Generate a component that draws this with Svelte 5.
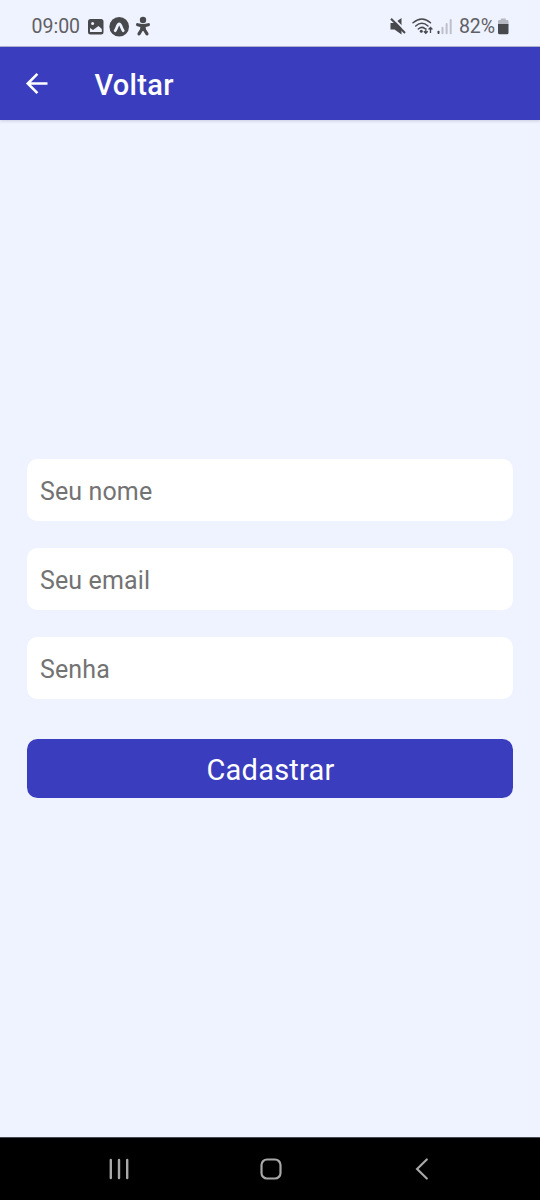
<script>
  const fields = [
    { name: 'nome', type: 'text', placeholder: 'Seu nome' },
    { name: 'email', type: 'email', placeholder: 'Seu email' },
    { name: 'senha', type: 'password', placeholder: 'Senha' }
  ];
</script>

<div class="screen">
  <div class="status">
    <span class="clock">09:00</span>
    <svg class="left-icons" width="68" height="24" viewBox="84 14 68 24">
      <rect x="88" y="19" width="15.5" height="15.5" rx="2.5" fill="#48494d" />
      <circle cx="92.6" cy="23.4" r="1.5" fill="#eff3ff" />
      <path d="M90 32v-4l3 2 5.500-4 3.300 3v3z" fill="#eff3ff" />
      <circle cx="119.200" cy="26.700" r="9.800" fill="#48494d" />
      <path d="M115.200 30.700c1.700-2.200 2.300-6.700 4-6.700s2.300 4.500 4 6.700" fill="none" stroke="#eff3ff" stroke-width="2.800" stroke-linecap="round" stroke-linejoin="round" />
      <circle cx="143" cy="20" r="3.200" fill="#48494d" />
      <path d="M137.600 24.700l4 .9h2.800l4-.9M143 25.500v4M141.700 27.500v2l-2.700 4.300M144.300 27.500v2l2.700 4.300" fill="none" stroke="#48494d" stroke-width="3.200" stroke-linecap="round" stroke-linejoin="round" />
    </svg>
    <span class="spacer"></span>
    <svg class="right-icons" width="66" height="24" viewBox="388 14 66 24">
      <path d="M390.500 23h4l7-5v16.500l-7-5h-4z" fill="#48494d" />
      <path d="M392 17l15 15" stroke="#eff3ff" stroke-width="2" />
      <path d="M391 18.800l14 14.200" stroke="#48494d" stroke-width="2" />
      <g fill="none" stroke="#48494d" stroke-width="1.500" stroke-linecap="round">
        <path d="M413 22.800q9-7.700 17.500 0" />
        <path d="M415.700 26q6.200-5.400 12.300 0" />
        <path d="M418.300 29q3.500-2.900 6.300-.6" />
      </g>
      <circle cx="421.300" cy="31.300" r="1.500" fill="#48494d" />
      <path d="M425.800 28v5M423.900 31.300l1.900 2 1.900-2M430.500 33v-5M428.600 29.500l1.900-2 1.900 2" fill="none" stroke="#48494d" stroke-width="1.300" />
      <rect x="437.500" y="30.800" width="2" height="3.200" rx=".7" fill="#48494d" />
      <path d="M442.500 27.700v5.500M446.600 24v9.200M450.700 20v13.200" stroke="#bdc0ca" stroke-width="2" stroke-linecap="round" />
    </svg>
    <span class="percent">82%</span>
    <svg class="battery" width="12" height="18" viewBox="497 17 12 18">
      <path d="M500.800 18.500h5v1.500h1.500q1.200 0 1.200 1.200v3.300h-10.500v-3.300q0-1.200 1.200-1.200h1.600z" fill="#b5b8c1" />
      <path d="M498 24h10.500v8.700q0 1.500-1.500 1.500h-7.500q-1.500 0-1.500-1.500z" fill="#48494d" />
    </svg>
  </div>

  <header>
    <svg width="24" height="24" viewBox="25 71.700 24 24" aria-label="Voltar">
      <path d="M47.500 83.200H28M37.400 73.600l-9.600 9.600 9.600 9.600" fill="none" stroke="#fff" stroke-width="2.600" />
    </svg>
    <h1>Voltar</h1>
  </header>

  <main>
    {#each fields as field}
      <input name={field.name} type={field.type} placeholder={field.placeholder} />
    {/each}
    <button type="button">Cadastrar</button>
  </main>

  <nav>
    <svg width="24" height="24" viewBox="107.500 1157 24 24">
      <path d="M111.300 1160v18M119.500 1160v18M127.700 1160v18" stroke="#a8a8a8" stroke-width="2.400" stroke-linecap="round" />
    </svg>
    <svg width="24" height="24" viewBox="258.500 1157 24 24">
      <rect x="261" y="1159.500" width="19" height="19" rx="5.500" fill="none" stroke="#a8a8a8" stroke-width="2.200" />
    </svg>
    <svg width="24" height="24" viewBox="410.500 1157 24 24">
      <path d="M427.300 1159.500l-9.700 9.500 9.700 9.500" fill="none" stroke="#a8a8a8" stroke-width="2.200" stroke-linecap="round" />
    </svg>
  </nav>
</div>

<style>
  :global(body) {
    margin: 0;
  }
  .screen {
    width: 540px;
    height: 1200px;
    display: flex;
    flex-direction: column;
    background: #eff3ff;
    font-family: Roboto, sans-serif;
    overflow: hidden;
  }
  svg {
    display: block;
    flex: none;
  }
  .status {
    box-sizing: border-box;
    height: 47px;
    flex: none;
    display: flex;
    align-items: center;
    padding: 6px 31px 0;
    border-bottom: 1px solid #b3b6cf;
    color: #5f6065;
    font-size: 19.500px;
    line-height: 24px;
  }
  .clock {
    box-sizing: border-box;
    width: 53px;
    padding: 2px 0 0 0.500px;
  }
  .spacer {
    flex: 1;
  }
  .percent {
    width: 38px;
    margin-left: 5px;
    padding-top: 2px;
    letter-spacing: -0.100px;
  }
  header {
    height: 73px;
    flex: none;
    display: flex;
    align-items: center;
    padding-left: 25px;
    background: #3a3dbd;
    box-shadow: 0 1px 3px rgba(40, 45, 90, 0.2);
  }
  h1 {
    margin: 3px 0 0 45.500px;
    color: #fff;
    font-size: 29px;
    font-weight: 500;
    line-height: 36px;
    letter-spacing: 0.300px;
  }
  main {
    flex: 1;
    display: flex;
    flex-direction: column;
    padding: 339px 27px 0;
  }
  input {
    box-sizing: border-box;
    width: 100%;
    height: 62.300px;
    margin: 0 0 26.700px;
    padding: 2px 13px 0;
    border: 0;
    border-radius: 10.500px;
    outline: 0;
    background: #fff;
    color: #222;
    font: 25px Roboto, sans-serif;
    letter-spacing: 0.120px;
  }
  input::placeholder {
    color: #737373;
    opacity: 1;
  }
  button {
    height: 59px;
    margin: 13px 0 0;
    padding: 3px 0 0 1px;
    border: 0;
    border-radius: 10.500px;
    background: #3a3dbd;
    color: #fff;
    font: 29px Roboto, sans-serif;
    letter-spacing: 0.200px;
  }
  nav {
    box-sizing: border-box;
    height: 63px;
    flex: none;
    display: flex;
    align-items: center;
    justify-content: space-between;
    padding: 0 106px 0 107px;
    border-top: 1px solid #4a4b4f;
    background: #000;
  }
</style>
